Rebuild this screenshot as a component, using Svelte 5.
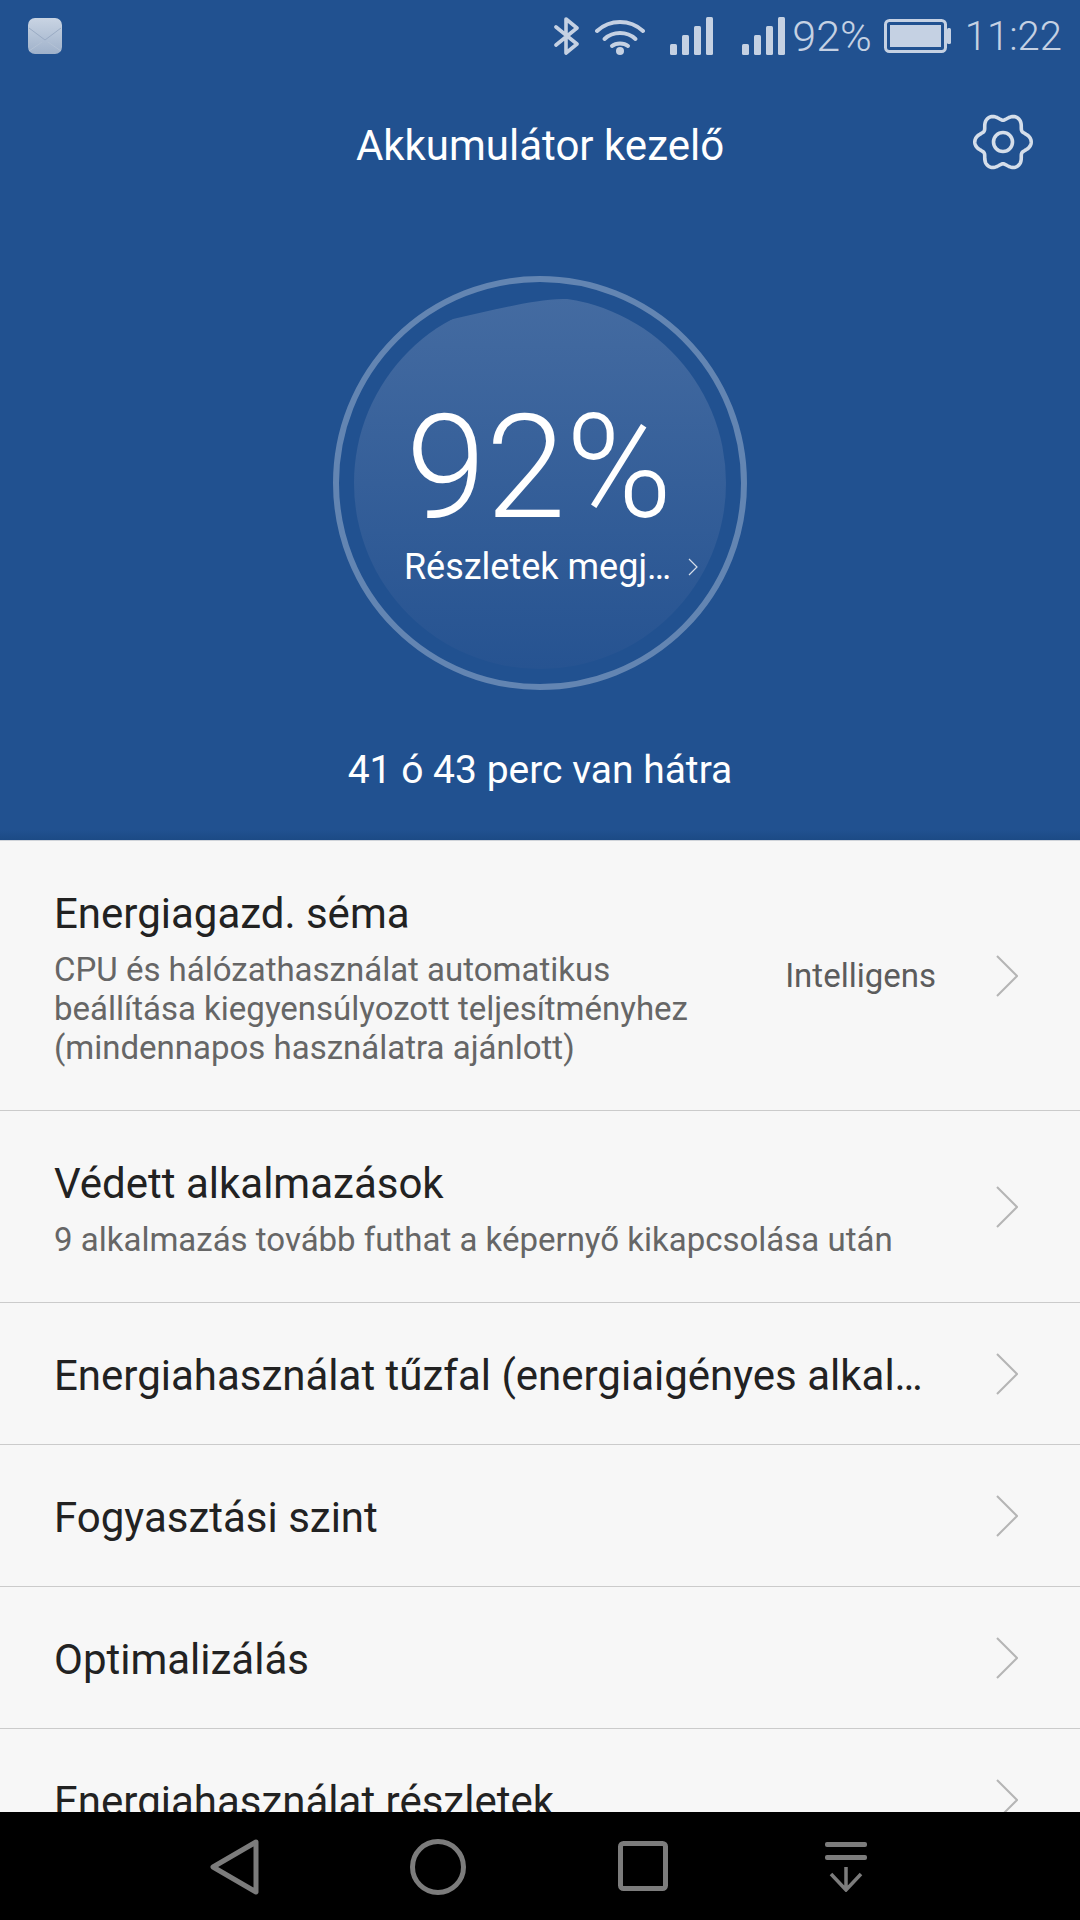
<script lang="ts">
  interface Row {
    title: string;
    lines?: string[];
    value?: string;
  }

  const rows: Row[] = [
    {
      title: 'Energiagazd. séma',
      lines: [
        'CPU és hálózathasználat automatikus',
        'beállítása kiegyensúlyozott teljesítményhez',
        '(mindennapos használatra ajánlott)'
      ],
      value: 'Intelligens'
    },
    {
      title: 'Védett alkalmazások',
      lines: ['9 alkalmazás tovább futhat a képernyő kikapcsolása után']
    },
    { title: 'Energiahasználat tűzfal (energiaigényes alkal…' },
    { title: 'Fogyasztási szint' },
    { title: 'Optimalizálás' },
    { title: 'Energiahasználat részletek' }
  ];

  // six soft lobes, notch at the top and bottom
  function gearPath(): string {
    const pts: string[] = [];
    for (let i = 0; i < 180; i++) {
      const a = (i / 180) * Math.PI * 2;
      const r = 25.3 + 3.2 * Math.cos(6 * a) - 0.3 * Math.cos(12 * a);
      pts.push(`${(30 + r * Math.cos(a)).toFixed(2)} ${(30 + r * Math.sin(a)).toFixed(2)}`);
    }
    return 'M' + pts.join('L') + 'Z';
  }
</script>

<div class="screen">
  <header class="hero">
    <div class="status">
      <svg class="mail" width="34" height="36" viewBox="0 0 34 36" aria-hidden="true">
        <defs>
          <linearGradient id="mailFill" x1="0" y1="0" x2="0" y2="1">
            <stop offset="0" stop-color="#c9d4e3" />
            <stop offset="1" stop-color="#9fb1ca" />
          </linearGradient>
        </defs>
        <rect width="34" height="36" rx="7" fill="url(#mailFill)" />
        <path d="M1 10 17 22 33 10" fill="none" stroke="#9aabc4" stroke-width="1" />
        <path d="M1 33 14 24M33 33 20 24" fill="none" stroke="#b4c2d5" stroke-width="1" />
      </svg>
      <span class="spacer"></span>
      <svg class="ic-bt" width="26" height="38" viewBox="0 0 26 38" aria-hidden="true">
        <path d="M2 10 23 27 12 36V2L23 11 2 28" fill="none" stroke="#c5d1e3" stroke-width="3.6" stroke-linecap="round" stroke-linejoin="round" />
      </svg>
      <svg class="ic-wifi" width="50" height="38" viewBox="0 0 50 38" aria-hidden="true">
        <g fill="none" stroke="#c5d1e3" stroke-width="4" stroke-linecap="round">
          <path d="M2 14C15 2 35 2 48 14" />
          <path d="M9.500 22C18 14 32 14 40.500 22" />
          <path d="M17 29C21 25.500 29 25.500 33 29" />
        </g>
        <circle cx="25" cy="34" r="4" fill="#c5d1e3" />
      </svg>
      {#each [0, 1] as s}
        <svg class="ic-signal" class:second={s === 1} width="43" height="38" viewBox="0 0 43 38" aria-hidden="true">
          <g fill="#c5d1e3">
            <rect x="0" y="27" width="7" height="11" rx="1.500" />
            <rect x="12" y="18" width="7" height="20" rx="1.500" />
            <rect x="24" y="9" width="7" height="29" rx="1.500" />
            <rect x="36" y="0" width="7" height="38" rx="1.500" />
          </g>
        </svg>
      {/each}
      <span class="pct">92%</span>
      <svg class="ic-batt" width="67" height="34" viewBox="0 0 67 34" aria-hidden="true">
        <rect x="1.500" y="1.500" width="60" height="31" rx="4" fill="none" stroke="#c5d1e3" stroke-width="3" />
        <rect x="6" y="6" width="51" height="22" fill="#c5d1e3" />
        <rect x="63" y="9" width="4" height="16" rx="1.500" fill="#c5d1e3" />
      </svg>
      <span class="time">11:22</span>
    </div>

    <div class="title-bar">
      <h1>Akkumulátor kezelő</h1>
      <svg class="gear" width="60" height="60" viewBox="0 0 60 60" aria-hidden="true">
        <path d={gearPath()} fill="none" stroke="#d5deea" stroke-width="3.600" />
        <circle cx="30" cy="30" r="9.500" fill="none" stroke="#d5deea" stroke-width="3.600" />
      </svg>
    </div>

    <div class="gauge">
      <svg class="dial" width="420" height="420" viewBox="0 0 420 420" aria-hidden="true">
        <defs>
          <linearGradient id="discFill" x1="0" y1="0" x2="0" y2="1">
            <stop offset="0" stop-color="#446ba1" />
            <stop offset="1" stop-color="#265391" />
          </linearGradient>
          <clipPath id="wave">
            <path d="M0 90 L123 46 C160 38 200 27 233 26 C260 26 300 0 420 0 V420 H0Z" />
          </clipPath>
        </defs>
        <circle cx="210" cy="210" r="186" fill="url(#discFill)" clip-path="url(#wave)" />
        <circle cx="210" cy="210" r="204" fill="none" stroke="#6385b2" stroke-width="6" />
      </svg>
      <div class="readout">
        <div class="big">92%</div>
        <div class="details">
          <span>Részletek megj…</span>
          <svg width="10" height="18" viewBox="0 0 10 18" aria-hidden="true">
            <path d="M1 1 9 9 1 17" fill="none" stroke="#d5deea" stroke-width="1.200" />
          </svg>
        </div>
      </div>
    </div>

    <p class="remaining">41 ó 43 perc van hátra</p>
  </header>

  <main class="list">
    {#each rows as row}
      <div class="row" class:tall={row.lines?.length === 3} class:mid={row.lines?.length === 1}>
        <div class="row-text">
          <div class="row-title">{row.title}</div>
          {#if row.lines}
            <div class="row-sub">
              {#each row.lines as line}
                <div>{line}</div>
              {/each}
            </div>
          {/if}
        </div>
        {#if row.value}
          <span class="row-value">{row.value}</span>
        {/if}
        <svg class="chev" width="22" height="42" viewBox="0 0 22 42" aria-hidden="true">
          <path d="M1 1 21 21 1 41" fill="none" stroke="#b5b5b5" stroke-width="2" />
        </svg>
      </div>
    {/each}
  </main>

  <nav class="nav">
    <svg class="n-back" width="50" height="56" viewBox="0 0 50 56" aria-hidden="true">
      <path d="M46 3 3 28 46 53Z" fill="none" stroke="#7c7c7c" stroke-width="5" stroke-linejoin="round" />
    </svg>
    <svg class="n-home" width="56" height="56" viewBox="0 0 56 56" aria-hidden="true">
      <circle cx="28" cy="28" r="25.500" fill="none" stroke="#7c7c7c" stroke-width="5" />
    </svg>
    <svg class="n-recent" width="50" height="50" viewBox="0 0 50 50" aria-hidden="true">
      <rect x="2.500" y="2.500" width="45" height="45" rx="3" fill="none" stroke="#7c7c7c" stroke-width="5" />
    </svg>
    <svg class="n-pull" width="42" height="50" viewBox="0 0 42 50" aria-hidden="true">
      <rect width="42" height="5" rx="2" fill="#7c7c7c" />
      <rect y="13" width="42" height="5" rx="2" fill="#7c7c7c" />
      <path d="M21 25V48M6 32 21 48 36 32" fill="none" stroke="#7c7c7c" stroke-width="3.500" />
    </svg>
  </nav>
</div>

<style>
  :global(body) {
    margin: 0;
    background: #000;
  }

  .screen {
    width: 1080px;
    height: 1920px;
    display: flex;
    flex-direction: column;
    overflow: hidden;
    font-family: Roboto, 'Liberation Sans', sans-serif;
  }

  /* ---- Blue header ---- */
  .hero {
    height: 840px;
    flex-shrink: 0;
    box-sizing: border-box;
    background: linear-gradient(to bottom, #215190 0, #215190 830px, #1c4a85 840px);
    color: #fff;
    display: flex;
    flex-direction: column;
  }

  .status {
    display: flex;
    align-items: center;
    height: 72px;
    padding: 0 18px 0 28px;
    color: #c5d1e3;
  }

  .spacer { flex: 1; }
  .ic-wifi { margin-left: 15px; }
  .ic-signal { margin-left: 25px; }
  .ic-signal.second { margin-left: 29px; }

  .pct {
    margin-left: 7px;
    font-size: 43px;
    font-weight: 300;
  }

  .ic-batt { margin-left: 12px; }

  .time {
    margin-left: 14px;
    font-size: 40px;
    font-weight: 300;
  }

  .title-bar {
    height: 146px;
    display: flex;
    align-items: center;
    justify-content: center;
    position: relative;
  }

  h1 {
    margin: 0;
    font-size: 42px;
    font-weight: 400;
  }

  .gear {
    position: absolute;
    left: 973px;
    top: 40px;
  }

  .gauge {
    margin: 55px auto 0;
    width: 420px;
    height: 420px;
    position: relative;
  }

  .dial { display: block; }

  .readout {
    position: absolute;
    inset: 0;
    display: flex;
    flex-direction: column;
    align-items: center;
  }

  .big {
    margin: 130px 2px 0 0;
    font-size: 144px;
    font-weight: 300;
    line-height: 130px;
  }

  .details {
    display: flex;
    align-items: center;
    gap: 17px;
    margin: 12px 0 0 22px;
    font-size: 36px;
    line-height: 44px;
    white-space: nowrap;
  }

  .remaining {
    margin: 55px 0 0;
    text-align: center;
    font-size: 39px;
    line-height: 44px;
  }

  /* ---- Settings list ---- */
  .list {
    flex: 1;
    min-height: 0;
    overflow: hidden;
    background: #f7f7f7;
    border-top: 1px solid #d0d4da;
  }

  .row {
    box-sizing: border-box;
    height: 142px;
    flex-shrink: 0;
    display: flex;
    align-items: center;
    padding: 0 62px 0 54px;
    border-bottom: 1px solid #cbcbcb;
  }

  .row.tall { height: 270px; }
  .row.mid { height: 192px; }

  .row-text {
    flex: 1;
    min-width: 0;
    padding-top: 4px;
  }

  .row-title {
    font-size: 42px;
    line-height: 50px;
    color: #222;
    white-space: nowrap;
  }

  .row-sub {
    margin-top: 11px;
    font-size: 33px;
    line-height: 39px;
    color: #666;
    white-space: nowrap;
  }

  .row-value {
    margin-right: 60px;
    font-size: 33px;
    color: #5c5c5c;
  }

  .chev { flex-shrink: 0; }

  /* ---- Navigation bar ---- */
  .nav {
    height: 108px;
    flex-shrink: 0;
    background: #000;
    position: relative;
  }

  .nav svg { position: absolute; }
  .n-back { left: 210px; top: 27px; }
  .n-home { left: 410px; top: 27px; }
  .n-recent { left: 618px; top: 29px; }
  .n-pull { left: 825px; top: 30px; }
</style>
